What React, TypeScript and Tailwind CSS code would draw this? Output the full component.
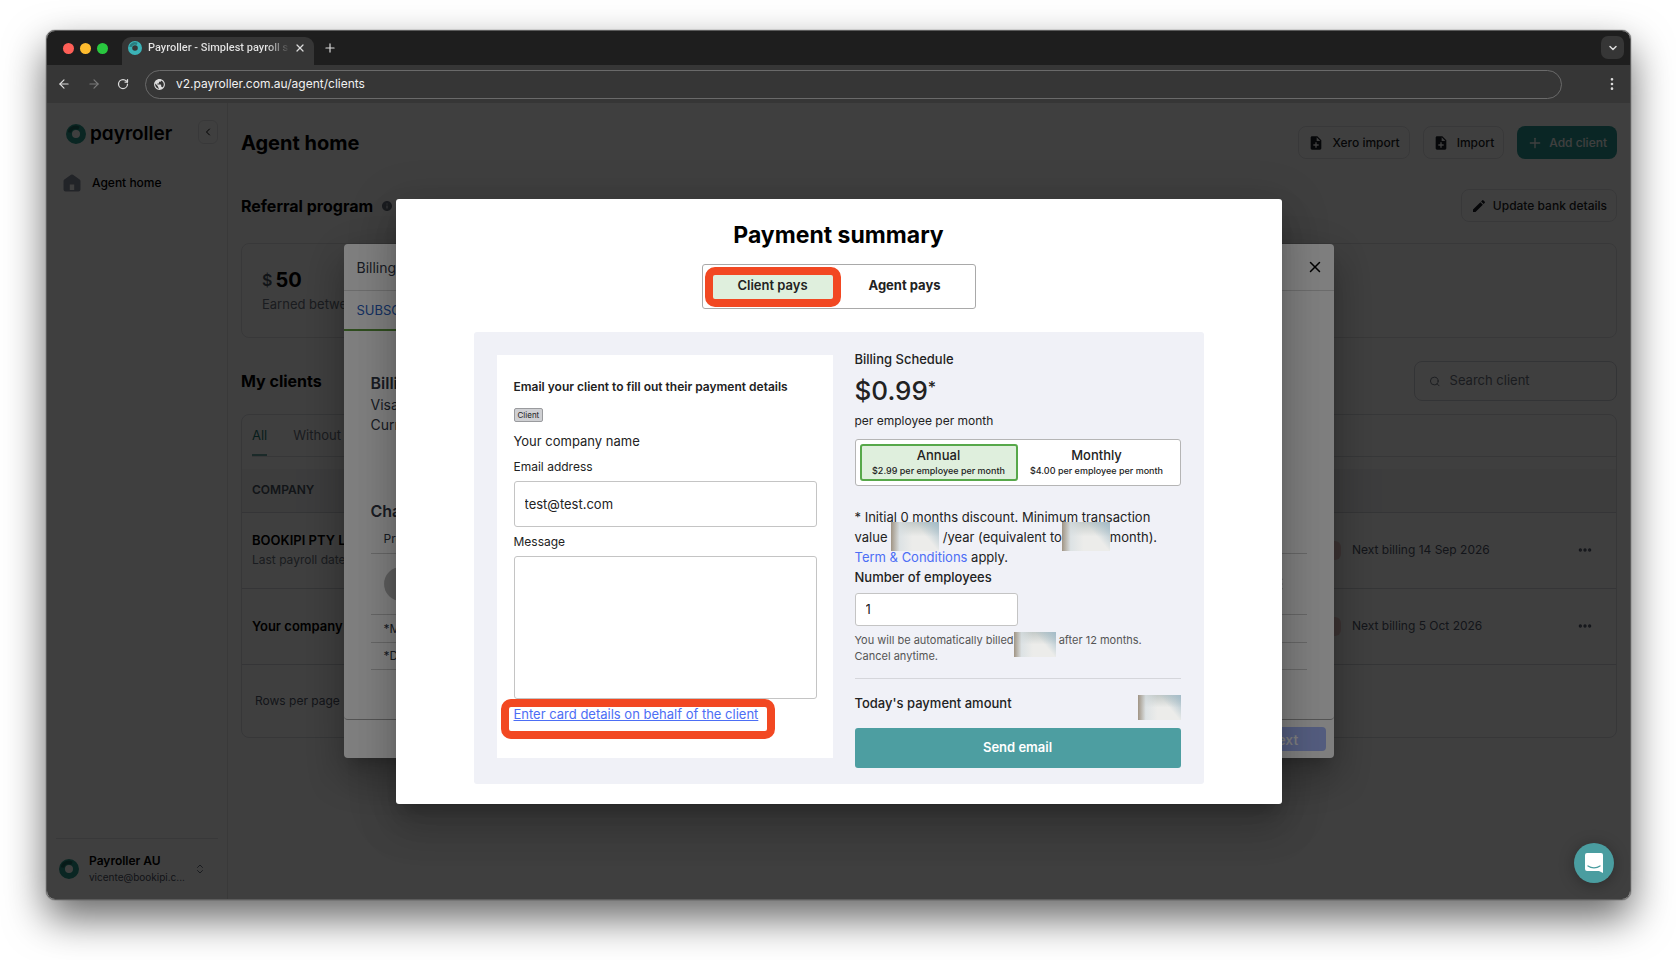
import * as React from 'react';
import {
  ArrowLeft,
  ArrowRight,
  ChevronDown,
  ChevronLeft,
  ChevronsUpDown,
  EllipsisVertical,
  Ellipsis,
  Plus,
  RotateCw,
  Search,
  X,
} from 'lucide-react';
import { MdEdit, MdInfo, MdNoteAdd, MdPublic } from 'react-icons/md';

function Ring({ className }: { className?: string }) {
  return (
    <svg viewBox="0 0 20 20" className={className} aria-hidden="true">
      <circle cx="10" cy="10" r="7" fill="none" stroke="currentColor" strokeWidth="6" />
      <path d="M3.500 8.500C4 4.500 8.500 2 13 4.200" fill="none" stroke="#000" strokeOpacity="0.3" strokeWidth="3.500" />
    </svg>
  );
}

// covers an amount that should not be readable
function Redacted({ className }: { className: string }) {
  return (
    <span
      aria-hidden="true"
      className={`inline-block bg-[#ececea] bg-[linear-gradient(90deg,#a09484,rgba(214,222,226,0.7)_18%,transparent_45%),linear-gradient(230deg,#a3bcc9,transparent_35%),linear-gradient(180deg,#c3cac8,transparent_50%)] ${className}`}
    />
  );
}

function BrowserBar() {
  return (
    <header className="text-[#dcdcdc]">
      <div className="flex h-[34px] items-end bg-[#1e1e1e] pr-1.5 pl-4">
        <div className="flex gap-[6px] self-center">
          <span className="size-[11px] rounded-full bg-[#fe5f57]" />
          <span className="size-[11px] rounded-full bg-[#febb2e]" />
          <span className="size-[11px] rounded-full bg-[#29c73f]" />
        </div>
        <div className="ml-[14px] flex h-7 w-[192px] items-center gap-[6px] rounded-t-[9px] bg-[#363636] pb-1.5 pl-1.5">
          <Ring className="size-[14px] shrink-0 text-[#3bb3b7]" />
          <span className="w-[140px] bg-gradient-to-r from-[#e6e6e6] from-85% to-[#454545] bg-clip-text font-['Roboto',sans-serif] text-[11px] font-medium whitespace-nowrap text-transparent">
            Payroller - Simplest payroll so
          </span>
          <button type="button" aria-label="Close tab">
            <X className="size-3" strokeWidth={2.5} />
          </button>
        </div>
        <button type="button" aria-label="New tab" className="ml-[9px] self-center">
          <Plus className="size-[14px]" />
        </button>
        <button
          type="button"
          aria-label="Search tabs"
          className="mb-1.5 ml-auto flex size-[23px] items-center justify-center rounded-[7px] bg-[#363636]"
        >
          <ChevronDown className="size-3" strokeWidth={3} />
        </button>
      </div>
      <div className="flex h-[38px] items-center bg-[#363636] pr-2.5 pl-2.5">
        <button type="button" aria-label="Back">
          <ArrowLeft className="size-[14px]" />
        </button>
        <button type="button" aria-label="Forward" className="ml-4 text-[#7a7a7a]">
          <ArrowRight className="size-[14px]" />
        </button>
        <button type="button" aria-label="Reload" className="ml-4">
          <RotateCw className="size-3" strokeWidth={2.5} />
        </button>
        <div className="mr-[42px] ml-4 flex h-[29px] flex-1 items-center gap-[10px] rounded-full border border-[#6a6a6a] px-[7px]">
          <MdPublic className="size-[13px] shrink-0" />
          <input
            aria-label="Address"
            readOnly
            value="v2.payroller.com.au/agent/clients"
            className="w-full bg-transparent text-[12px] text-[#f1f1f1] outline-none"
          />
        </div>
        <button type="button" aria-label="Menu">
          <EllipsisVertical className="size-4" />
        </button>
      </div>
    </header>
  );
}

function Sidebar() {
  return (
    <aside className="flex w-[181px] shrink-0 flex-col border-r border-[#e4e4e7]">
      <div className="flex items-center pt-[15px] pr-[9px] pl-[19px]">
        <div className="flex items-center gap-1 pt-1">
          <Ring className="size-5 text-[#2a9a8c]" />
          <span className="text-[19px] leading-6 font-semibold [font-feature-settings:'cv11']">payroller</span>
        </div>
        <button
          type="button"
          aria-label="Collapse menu"
          className="ml-auto flex h-6 w-5 items-center justify-center rounded-md border border-[#e2e2e5]"
        >
          <ChevronLeft className="size-3" />
        </button>
      </div>
      <a href="#home" className="mt-7 flex items-center gap-[11px] pl-[16px] text-[12px] font-medium">
        <svg viewBox="0 0 18 18" className="size-[18px]" aria-hidden="true">
          <path
            fill="#8b90a0"
            fillRule="evenodd"
            d="M8 0.700a2 2 0 0 1 2 0L16.700 5.500a2 2 0 0 1 .8 1.600V15.500a2 2 0 0 1-2 2h-13a2 2 0 0 1-2-2V7.100a2 2 0 0 1 .8-1.600ZM6.800 10.500v5.500h4.400v-5.500Z"
          />
        </svg>
        Agent home
      </a>
      <div className="mr-[9px] ml-[9px] mt-auto flex h-[61px] items-center border-t border-[#e2e2e5] pl-[3px]">
        <Ring className="size-5 text-[#2a9a8c]" />
        <div className="ml-[10px]">
          <div className="text-[12px] leading-4 font-semibold">Payroller AU</div>
          <div className="text-[10px] leading-4 text-[#4b5060]">vicente@bookipi.c...</div>
        </div>
        <ChevronsUpDown className="mr-3 ml-auto size-3 text-[#6b7280]" />
      </div>
    </aside>
  );
}

const outlined = 'flex h-[33px] items-center rounded-lg border border-[#e2e2e5] text-[12px] font-medium text-[#1a1c24]';

function ClientRow({ name, note, billing }: { name: string; note?: string; billing: string }) {
  return (
    <tr className="h-[76px] border-t border-[#d4d7dc]">
      <td className="pl-2.5">
        <div className="text-[13px] leading-5 font-semibold">{name}</div>
        {note && <div className="text-[12px] leading-5 text-[#6b7280]">{note}</div>}
      </td>
      <td className="w-[275px]">
        <div className="flex items-center">
          <span className="-ml-16 w-16 rounded-md bg-[#f3cfcc] pr-2 text-right text-[12px] leading-[19px] text-[#b3261e]">
            in 9 days
          </span>
          <span className="ml-[11px] text-[12px] text-[#4f5668]">{billing}</span>
          <button type="button" aria-label="Row actions" className="mr-[23px] ml-auto">
            <Ellipsis className="size-4 text-[#4f5668]" strokeWidth={3} />
          </button>
        </div>
      </td>
    </tr>
  );
}

function AgentHome() {
  return (
    <main className="min-w-0 flex-1 pt-[23px] pr-[13px] pl-[13px]">
      <div className="flex h-[33px] items-center">
        <h1 className="text-[20px] leading-6 font-bold">Agent home</h1>
        <button type="button" className={`ml-auto gap-2 pr-[9px] pl-[9px] ${outlined}`}>
          <MdNoteAdd className="size-4" />
          Xero import
        </button>
        <button type="button" className={`ml-[13px] gap-2 pr-[9px] pl-[9px] ${outlined}`}>
          <MdNoteAdd className="size-4" />
          Import
        </button>
        <button
          type="button"
          className="ml-[13px] flex h-[33px] items-center gap-1.5 rounded-lg bg-[#2a9a94] px-2.5 text-[12px] font-medium text-white"
        >
          <Plus className="size-4" />
          Add client
        </button>
      </div>
      <div className="mt-[30px] flex h-[33px] items-center">
        <h2 className="text-[16px] font-bold">Referral program</h2>
        <MdInfo className="ml-2 size-3 text-[#6b7280]" />
        <button type="button" className={`ml-auto gap-1.5 pr-[9px] pl-[9px] ${outlined}`}>
          <MdEdit className="size-4" />
          Update bank details
        </button>
      </div>
      <section className="mt-[21px] h-[95px] rounded-lg border border-[#e2e2e5] px-5 pt-6">
        <div className="flex items-center gap-[3px] leading-6">
          <span className="text-[16px] font-semibold text-[#4b5563]">$</span>
          <span className="text-[20px] font-bold">50</span>
        </div>
        <p className="text-[13px] leading-6 text-[#6b7280]">Earned between 1 Jul and 30 Sep</p>
      </section>
      <div className="mt-[23px] flex h-10 items-center">
        <h2 className="text-[16px] font-bold">My clients</h2>
        <label className="ml-auto flex h-10 w-[203px] items-center gap-[9px] rounded-lg border border-[#cfd1d8] pl-3.5 text-[#6b7280]">
          <Search className="size-[13px]" />
          <input
            aria-label="Search client"
            placeholder="Search client"
            className="w-full min-w-0 bg-transparent text-[13px] outline-none placeholder:text-[#6b7280]"
          />
        </label>
      </div>
      <section className="mt-[13px] rounded-lg border border-[#dcdee3]">
        <nav className="mb-3 ml-2.5 flex h-[42px] gap-[26px] border-b border-[#dcdee3] text-[13px] leading-10 text-[#6b7280]">
          <a href="#all" className="border-b-2 border-[#6fa9a6] text-[#1f7a70]">All</a>
          <a href="#without">Without billing</a>
        </nav>
        <table className="w-full text-left">
          <thead>
            <tr className="h-[43px] bg-[#f4f5f6]">
              <th className="pl-2.5 text-[12px] font-semibold text-[#4b5563]">COMPANY</th>
              <th aria-label="Billing" />
            </tr>
          </thead>
          <tbody>
            <ClientRow name="BOOKIPI PTY LTD" note="Last payroll date 1 Sep" billing="Next billing 14 Sep 2026" />
            <ClientRow name="Your company name" billing="Next billing 5 Oct 2026" />
          </tbody>
        </table>
        <div className="flex h-[73px] items-center border-t border-[#d4d7dc] pl-[13px] text-[12px] text-[#4f5668]">
          Rows per page
        </div>
      </section>
    </main>
  );
}

const dialogShadow =
  'shadow-[0_11px_15px_-7px_rgba(0,0,0,0.2),0_24px_38px_3px_rgba(0,0,0,0.14),0_9px_46px_8px_rgba(0,0,0,0.12)]';

function BillingDialog() {
  return (
    <div role="dialog" aria-label="Billing" className={`flex h-[514px] w-[990px] flex-col rounded bg-white text-[#333947] ${dialogShadow}`}>
      <div className="flex h-[47px] items-center justify-between border-b border-[#d9d9d9] pr-[10px] pl-[13px]">
        <h2 className="text-[14px]">Billing</h2>
        <button type="button" aria-label="Close" className="text-black">
          <X className="size-[18px]" />
        </button>
      </div>
      <a href="#subscription" className="w-40 border-b-2 border-[#5f9a3e] px-[13px] text-[13px] leading-[38px] text-[#2a63c4]">
        SUBSCRIPTION
      </a>
      <div className="flex-1 rounded-b border-b border-[#a8a8a8] px-[27px] pt-10">
        <h3 className="text-[16px] leading-6 font-semibold">Billing details</h3>
        <p className="text-[14px] leading-5">Visa ending in 4242</p>
        <p className="text-[14px] leading-5">Current plan</p>
        <h3 className="mt-16 text-[16px] leading-6 font-semibold">Charges</h3>
        <div className="border-b border-[#cfcfcf] pt-1.5 pb-1 pl-[13px] text-[12px] leading-5">Product</div>
        <div className="flex h-[61px] items-center justify-between border-b border-[#cfcfcf] pl-[13px]">
          <span className="size-[34px] rounded-full bg-[#bdbdbd]" />
          <EllipsisVertical className="mr-[18px] size-4" />
        </div>
        <p className="border-b border-[#cfcfcf] pl-[13px] text-[12px] leading-[27px]">*Monthly</p>
        <p className="border-b border-[#cfcfcf] pl-[13px] text-[12px] leading-[26px]">*Discount</p>
      </div>
      <div className="flex h-[38px] items-center justify-end pr-2">
        <button type="button" className="h-6 w-[86px] rounded bg-[#a9bbff] text-[14px] font-medium text-white">
          Next
        </button>
      </div>
    </div>
  );
}

function PaymentDialog() {
  return (
    <div role="dialog" aria-label="Payment summary" className={`flex w-[886px] flex-col items-center rounded-[3px] bg-white pt-5 pb-5 text-[#222] ${dialogShadow}`}>
      <h2 className="text-[23px] leading-8 font-bold text-black">Payment summary</h2>
      <div className="mt-[13px] flex h-[45px] w-[274px] items-center rounded-[3px] border border-[#a9a9a9] p-1 text-[13px] font-bold">
        <div className="relative flex h-full flex-1 items-center">
          <button type="button" className="mx-1 h-7 w-full bg-[#dfefdd] font-semibold">
            Client pays
          </button>
          <span className="pointer-events-none absolute -inset-x-0.5 -top-0.5 h-10 rounded-[10px] border-8 border-[#f24822]" />
        </div>
        <button type="button" className="h-7 flex-1">
          Agent pays
        </button>
      </div>
      <div className="mt-[23px] flex w-[730px] gap-[22px] rounded-[3px] bg-[#f0f1f7] px-[23px] pt-[23px] pb-4">
        <form className="mb-2.5 flex w-[336px] flex-col items-start bg-white pt-6 pr-4 pl-[17px]">
          <h3 className="text-[12px] leading-4 font-semibold">Email your client to fill out their payment details</h3>
          <span className="mt-[13px] rounded-[2px] border border-[#9a9b9e] bg-[#cfd0d3] px-[3px] text-[8px] leading-3">
            Client
          </span>
          <p className="mt-[9px] text-[13px] leading-5">Your company name</p>
          <label htmlFor="email" className="mt-2 text-[12px] leading-4">
            Email address
          </label>
          <input
            id="email"
            type="email"
            defaultValue="test@test.com"
            className="mt-1.5 h-[46px] w-full rounded-[3px] border border-[#c4c4c4] px-2.5 text-[13px] outline-none"
          />
          <label htmlFor="message" className="mt-[7px] text-[12px] leading-4">
            Message
          </label>
          <textarea
            id="message"
            className="mt-1.5 block h-[143px] w-full resize-none rounded-[3px] border border-[#c4c4c4] outline-none"
          />
          <div className="relative">
            <a href="#card" className="text-[13px] leading-[30px] text-[#4c6ef5] underline">
              Enter card details on behalf of the client
            </a>
            <span className="pointer-events-none absolute -right-[17px] -left-[13px] top-0 h-10 rounded-[10px] border-8 border-[#f24822]" />
          </div>
        </form>
        <div className="flex w-[326px] flex-col">
          <h3 className="-mt-1.5 text-[13px] leading-5 font-medium">Billing Schedule</h3>
          <p className="mt-1 flex h-9 text-[26px] leading-9 font-medium">
            $0.99<sup className="top-0 text-[16px] leading-7">*</sup>
          </p>
          <p className="mt-0.5 text-[12px] leading-5">per employee per month</p>
          <div className="mt-2 flex h-[47px] rounded-[3px] border border-[#b5b5b5] bg-white p-1">
            <button type="button" className="w-[158px] rounded-[3px] border-2 border-[#57a84a] bg-[#dfefdd]">
              <span className="block text-[13px] leading-[18px] font-medium">Annual</span>
              <span className="block text-[9px] leading-[14px] font-medium">$2.99 per employee per month</span>
            </button>
            <button type="button" className="flex-1">
              <span className="block text-[13px] leading-[18px] font-medium">Monthly</span>
              <span className="block text-[9px] leading-[14px] font-medium">$4.00 per employee per month</span>
            </button>
          </div>
          <p className="mt-[21px] text-[13px] leading-5 whitespace-nowrap">
            * Initial 0 months discount. Minimum transaction
            <br />
            value <Redacted className="-mt-[5px] -mb-1 h-[29px] w-12 align-top" /> /year (equivalent to
            <Redacted className="-mt-[5px] -mb-1 h-[29px] w-12 align-top" />
            month).
            <br />
            <a href="#terms" className="text-[#4c6ef5]">
              Term &amp; Conditions
            </a>{' '}
            apply.
          </p>
          <label htmlFor="employees" className="text-[13px] leading-5 font-medium">
            Number of employees
          </label>
          <input
            id="employees"
            defaultValue="1"
            className="mt-1.5 h-[33px] w-[163px] rounded-[3px] border border-[#c4c4c4] bg-white px-2.5 text-[13px] outline-none"
          />
          <p className="mt-1.5 text-[11px] leading-4 text-[#555]">
            You will be automatically billed
            <Redacted className="-mb-[9px] h-[25px] w-[42px] align-top" /> after 12 months.
            <br />
            Cancel anytime.
          </p>
          <div className="mt-3.5 flex items-start justify-between border-t border-[#d5d6db] pt-[14px] pb-2">
            <span className="text-[13px] leading-5 font-medium">Today's payment amount</span>
            <Redacted className="mt-0.5 h-[25px] w-[43px]" />
          </div>
          <button type="button" className="h-10 rounded-[3px] bg-[#4d9ea1] text-[13px] font-semibold text-white">
            Send email
          </button>
        </div>
      </div>
    </div>
  );
}

export default function App() {
  return (
    <div className="flex min-h-screen flex-col bg-white pt-[30px] pr-[45px] pb-[60px] pl-[46px] font-['Inter',sans-serif]">
      <div className="flex flex-1 flex-col overflow-hidden rounded-[9px] border border-[#5c5c5c] shadow-[0_0_1px_#000,0_18px_40px_rgba(0,0,0,0.6)]">
        <BrowserBar />
        <div className="relative flex flex-1 bg-white text-black">
          <Sidebar />
          <AgentHome />
          <div className="absolute inset-0 flex items-center justify-center bg-black/50">
            <BillingDialog />
          </div>
          <div className="absolute inset-0 flex items-center justify-center bg-black/50">
            <PaymentDialog />
          </div>
          <button
            type="button"
            aria-label="Open chat"
            className="absolute right-4 bottom-4 flex size-10 items-center justify-center rounded-full bg-[#4a9da0] shadow-[0_2px_16px_rgba(0,0,0,0.3)]"
          >
            <svg viewBox="0 0 20 22" className="h-[22px] w-5" aria-hidden="true">
              <path fill="#fff" d="M3 1h14a2 2 0 0 1 2 2v18l-4-2H3a2 2 0 0 1-2-2V3a2 2 0 0 1 2-2Z" />
              <path d="M4 14c3.500 2.600 8.500 2.600 12 0" fill="none" stroke="#4a9da0" strokeWidth="1.300" strokeLinecap="round" />
            </svg>
          </button>
        </div>
      </div>
    </div>
  );
}
